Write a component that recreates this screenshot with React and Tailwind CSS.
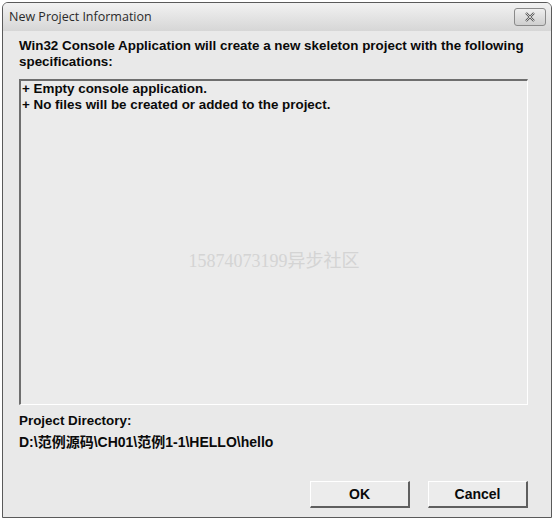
export default function App() {
  return (
    <div className="w-[554px] h-[520px] bg-white p-[2px] font-['Liberation_Sans',Arial,sans-serif]">
      <div className="flex h-full flex-col rounded-t-[6px] border border-[#5a5a5a] bg-[#e9e9e9]">
        {/* Title bar */}
        <div className="flex h-[28px] items-center justify-between rounded-t-[5px] bg-gradient-to-b from-[#f2f2f2] to-[#d6d6d6] pl-[6px] pr-[5px]">
          <span className="text-[12.5px] text-[#2a2a2a] font-['Open_Sans',sans-serif]">New Project Information</span>
          <div className="flex h-[18px] w-[32px] items-center justify-center rounded-[3px] border border-[#8a8a8a] bg-gradient-to-b from-[#efefef] to-[#cfcfcf]">
            <svg width="12" height="10" viewBox="0 0 12 10">
              <path d="M2 1 L10 9 M10 1 L2 9" stroke="#555" strokeWidth="2.2" fill="none" />
              <path d="M2 1 L10 9 M10 1 L2 9" stroke="#eee" strokeWidth="0.8" fill="none" />
            </svg>
          </div>
        </div>

        {/* Client area */}
        <div className="flex flex-1 flex-col pl-[16px] pr-[23px] pt-[7px] pb-[9px] text-[13.4px] font-bold leading-[16px] text-[#0a0a0a]">
          <p className="whitespace-nowrap">Win32 Console Application will create a new skeleton project with the following</p>
          <p>specifications:</p>

          <div className="mt-[9px] h-[326px] border-t-2 border-l-2 border-t-[#6e6e6e] border-l-[#6e6e6e] border-r border-b border-r-white border-b-white bg-[#ebebeb]">
            <div className="relative h-full pl-[1px]">
              <p>+ Empty console application.</p>
              <p>+ No files will be created or added to the project.</p>
              <div className="absolute left-0 right-0 top-[172px] text-center text-[18px] font-normal text-[#d4d4d4] font-['Liberation_Serif','Noto_Sans_CJK_SC',serif]">
                15874073199异步社区
              </div>
            </div>
          </div>

          <p className="mt-[8px]">Project Directory:</p>
          <p className="mt-[5px] text-[14px] font-['Liberation_Sans','Noto_Sans_CJK_SC',sans-serif]">D:\范例源码\CH01\范例1-1\HELLO\hello</p>

          <div className="mt-auto flex justify-end gap-[18px]">
            <button className="h-[27px] w-[100px] border-t border-l border-t-white border-l-white border-r-2 border-b-2 border-r-[#5f5f5f] border-b-[#5f5f5f] bg-[#ececec] text-[14px] font-bold">OK</button>
            <button className="h-[27px] w-[100px] border-t border-l border-t-white border-l-white border-r-2 border-b-2 border-r-[#5f5f5f] border-b-[#5f5f5f] bg-[#ececec] text-[14px] font-bold">Cancel</button>
          </div>
        </div>
      </div>
    </div>
  );
}
